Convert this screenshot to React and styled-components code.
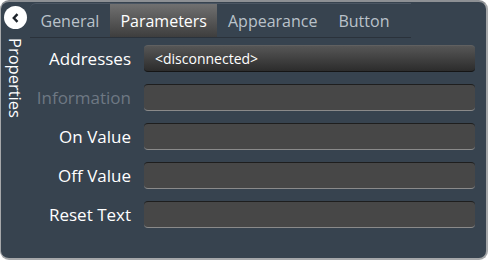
import React, { useState } from 'react'
import styled, { createGlobalStyle } from 'styled-components'

const GlobalStyle = createGlobalStyle`
  body {
    margin: 0;
    background: #ffffff;
    font-family: "Open Sans", "Noto Sans", sans-serif;
  }
`

const Panel = styled.div`
  box-sizing: border-box;
  width: 488px;
  height: 260px;
  display: flex;
  background: #37434f;
  border: 2px solid #a6a8aa;
  border-left-width: 1px;
  border-top-color: #8d9094;
  border-radius: 9px;
  overflow: hidden;
`

const Sidebar = styled.div`
  width: 29px;
  display: flex;
  flex-direction: column;
  align-items: center;
  padding-top: 4px;
`

const BackButton = styled.button`
  width: 23px;
  height: 23px;
  border-radius: 50%;
  border: none;
  padding: 0;
  background: #ffffff;
  display: flex;
  align-items: center;
  justify-content: center;
  cursor: pointer;
`

const SideTitle = styled.div`
  writing-mode: vertical-rl;
  margin-top: 9px;
  margin-left: -2px;
  color: #ffffff;
  font-size: 16.5px;
  line-height: 18px;
`

const Main = styled.div`
  flex: 1;
  display: flex;
  flex-direction: column;
  padding-top: 1px;
`

const TabBar = styled.div`
  display: flex;
  align-self: flex-start;
  height: 33px;
  padding-right: 11px;
  border-top: 1px solid #4b5663;
  border-bottom: 1px solid #2a323b;
  border-radius: 6px 0 0 0;
`

const Tab = styled.div`
  display: flex;
  align-items: center;
  padding: 0 10.5px;
  font-size: 16px;
  color: ${p => (p.$active ? '#ffffff' : '#bac2ca')};
  background: ${p => (p.$active ? 'linear-gradient(#707070, #3e3e3e)' : 'transparent')};
  cursor: pointer;
`

const Form = styled.div`
  display: grid;
  grid-template-columns: 101px 1fr;
  column-gap: 13px;
  row-gap: 12px;
  padding: 7px 11px 0 0;
`

const Label = styled.div`
  text-align: right;
  align-self: center;
  font-size: 17px;
  white-space: nowrap;
  color: ${p => (p.$disabled ? '#6e7883' : '#ffffff')};
`

const Field = styled.div`
  box-sizing: border-box;
  height: 27px;
  border-radius: 4px;
  display: flex;
  align-items: center;
  padding-left: 11px;
  font-size: 14px;
  color: #ffffff;
  background: ${p => (p.$raised ? 'linear-gradient(#565656, #2c2c2c)' : '#474747')};
  border-top: 1px solid ${p => (p.$raised ? '#606060' : '#1e1e1e')};
  border-bottom: 1px solid ${p => (p.$raised ? '#151515' : '#8a8a8a')};
`

const rows = [
  { label: 'Addresses', value: '<disconnected>', raised: true },
  { label: 'Information', disabled: true },
  { label: 'On Value' },
  { label: 'Off Value' },
  { label: 'Reset Text' },
]

const tabs = ['General', 'Parameters', 'Appearance', 'Button']

export default function App() {
  const [active, setActive] = useState(1)
  return (
    <>
      <GlobalStyle />
      <Panel>
        <Sidebar>
          <BackButton>
            <svg width="12" height="12" viewBox="0 0 12 12">
              <path d="M7.5 2.2 L3.8 6 L7.5 9.8" fill="none" stroke="#1d232a" strokeWidth="2.4" />
            </svg>
          </BackButton>
          <SideTitle>Properties</SideTitle>
        </Sidebar>
        <Main>
          <TabBar>
            {tabs.map((t, i) => (
              <Tab key={t} $active={i === active} onClick={() => setActive(i)}>{t}</Tab>
            ))}
          </TabBar>
          <Form>
            {rows.map(r => (
              <React.Fragment key={r.label}>
                <Label $disabled={r.disabled}>{r.label}</Label>
                <Field $raised={r.raised}>{r.value}</Field>
              </React.Fragment>
            ))}
          </Form>
        </Main>
      </Panel>
    </>
  )
}
